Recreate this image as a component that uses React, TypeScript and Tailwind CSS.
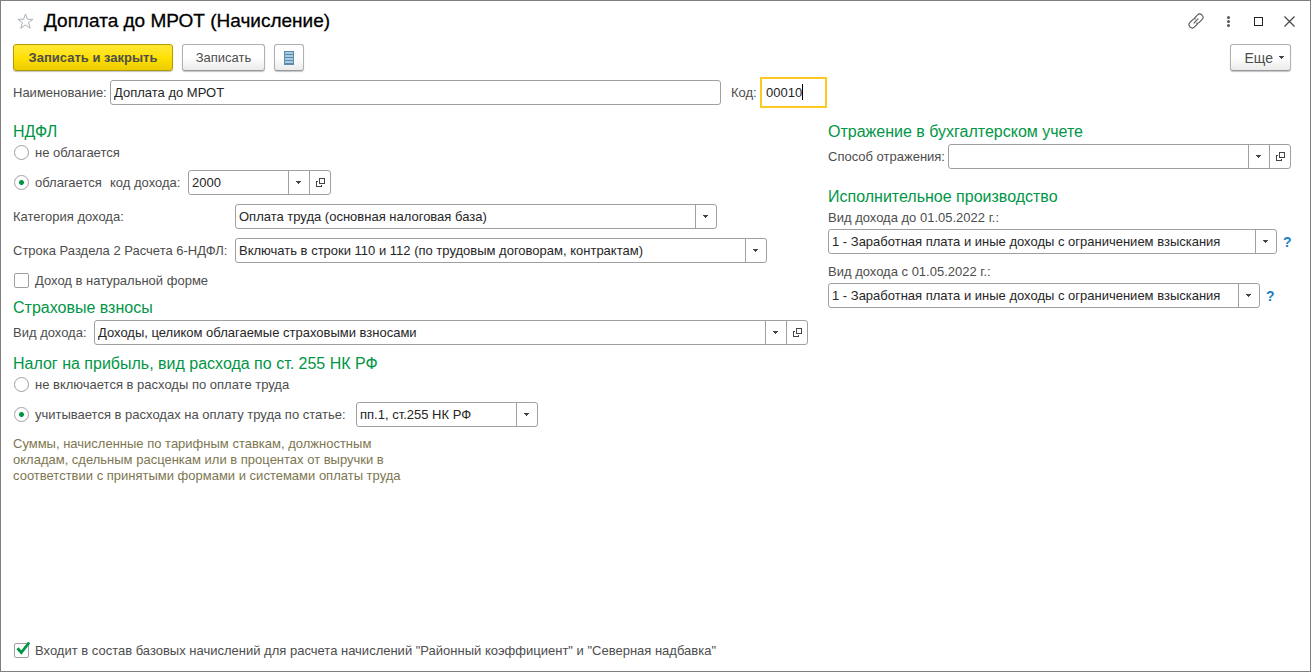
import type { ReactNode } from 'react';

const controlBorder = 'border border-[#a0a0a0] rounded-[3px]';
const buttonBase =
  'h-[27px] rounded-[3px] border border-[#b0b0b0] border-b-[#999999] bg-linear-to-b from-white from-50% to-[#ebebeb] text-[#4d4d4d] shadow-[0_1px_1px_#c4c4c4]';

function Arrow() {
  return (
    <svg width="5" height="3" viewBox="0 0 5 3" shapeRendering="crispEdges">
      <path d="M0 0h5v1H0zM1 1h3v1H1zM2 2h1v1H2z" fill="#444" />
    </svg>
  );
}

interface ComboProps {
  id: string;
  value: string;
  className?: string;
  openable?: boolean;
}

function Combo({ id, value, className = '', openable = false }: ComboProps) {
  return (
    <div className={`flex h-[25px] min-w-0 overflow-hidden bg-white ${controlBorder} ${className}`}>
      <div className="relative min-w-0 flex-1">
        <select
          id={id}
          defaultValue={value}
          className="block h-full w-full appearance-none truncate bg-transparent pr-6 pl-[3px] text-[#262626] outline-none"
        >
          <option value={value}>{value}</option>
        </select>
        <span className="pointer-events-none absolute inset-y-0 right-0 flex w-[21px] items-center justify-center border-l border-[#a0a0a0] pr-px">
          <Arrow />
        </span>
      </div>
      {openable && (
        <button
          type="button"
          aria-label="Открыть"
          className="flex w-[21px] shrink-0 items-center justify-center border-l border-[#a0a0a0]"
        >
          <svg width="9" height="9" viewBox="0 0 9 9" fill="none" stroke="#444" shapeRendering="crispEdges">
            <path d="M3.5 0.5h5v5h-5zM2 3.5H0.5v5h5V7" />
          </svg>
        </button>
      )}
    </div>
  );
}

function Heading({ children, className = '' }: { children: ReactNode; className?: string }) {
  return <h2 className={`h-6 pt-px text-[16px] leading-6 text-[#009646] ${className}`}>{children}</h2>;
}

interface RadioProps {
  name: string;
  label: string;
  checked?: boolean;
}

function Radio({ name, label, checked }: RadioProps) {
  return (
    <label className="flex h-[19px] items-center gap-[6px] pl-px">
      <input
        type="radio"
        name={name}
        defaultChecked={checked}
        className="size-[15px] shrink-0 appearance-none rounded-full border border-[#a0a0a0] bg-white checked:bg-[radial-gradient(circle,#009646_2px,#ffffff_3px)]"
      />
      {label}
    </label>
  );
}

function Checkbox({ label, checked }: { label: string; checked?: boolean }) {
  return (
    <label className="flex h-[19px] items-center gap-[6px] pl-px">
      <span className="relative flex size-[15px] shrink-0">
        <input
          type="checkbox"
          defaultChecked={checked}
          className="peer size-[15px] appearance-none rounded-[2px] border border-[#a0a0a0] bg-white"
        />
        <svg
          width="15"
          height="15"
          viewBox="0 0 15 15"
          fill="none"
          className="pointer-events-none absolute inset-0 hidden overflow-visible peer-checked:block"
        >
          <path d="M3.5 5.2L7.3 9.5L15.2 -0.5" stroke="#009646" strokeWidth="2.8" />
        </svg>
      </span>
      {label}
    </label>
  );
}

function Help() {
  return (
    <button type="button" aria-label="Справка" className="pl-[6px] text-[14px] font-bold text-[#1a7fc4]">
      ?
    </button>
  );
}

function TitleBar() {
  return (
    <header className="flex h-10 items-center">
      <button type="button" aria-label="В избранное" className="mr-[10px] ml-[4px]">
        <svg width="17" height="17" viewBox="0 0 17 17" fill="none" stroke="#a9afb5">
          <path d="M8.5 1l1.9 5.3h5.6l-4.5 3.4 1.7 5.6-4.7-3.4-4.7 3.4 1.7-5.6L1 6.3h5.6z" />
        </svg>
      </button>
      <h1 className="flex-1 text-[19px] leading-6 text-black [-webkit-text-stroke:0.3px_black]">
        Доплата до МРОТ (Начисление)
      </h1>
      <div className="flex items-center">
        <button type="button" aria-label="Получить ссылку" className="mr-[23px]">
          <svg width="16" height="16" viewBox="0 0 16 16" fill="none" stroke="#555" strokeWidth="1.1">
            <path d="M6.2 5.3L9.6 1.8Q11.6 0 13.8 1.9Q16.2 4.2 14.2 6.4L11.2 9.4Q9.8 10.7 8.2 9.9" />
            <path d="M9.8 10.7L6.4 14.2Q4.4 16 2.2 14.1Q-0.2 11.8 1.8 9.6L4.8 6.6Q6.2 5.3 7.8 6.1" />
            <path d="M5.7 10.3L10.3 5.700" />
          </svg>
        </button>
        <button type="button" aria-label="Меню" className="mr-6">
          <svg width="3" height="11" viewBox="0 0 3 11" fill="#555">
            <circle cx="1.5" cy="1.5" r="1.5" />
            <circle cx="1.5" cy="5.5" r="1.5" />
            <circle cx="1.5" cy="9.5" r="1.5" />
          </svg>
        </button>
        <button type="button" aria-label="Развернуть" className="mr-[21px]">
          <svg width="9" height="9" viewBox="0 0 9 9" fill="none" stroke="#222" shapeRendering="crispEdges">
            <path d="M0.5 0.5h8v8h-8z" />
          </svg>
        </button>
        <button type="button" aria-label="Закрыть" className="-mr-1">
          <svg width="11" height="11" viewBox="0 0 11 11" stroke="#444" strokeWidth="1.2">
            <path d="M0.5 0.5l10 10M10.5 0.5l-10 10" />
          </svg>
        </button>
      </div>
    </header>
  );
}

export default function App() {
  return (
    <form className="flex min-h-screen flex-col border border-[#808080] bg-white pr-[19px] pb-[11px] pl-3 font-['Liberation_Sans',Arial,sans-serif] text-[13px] leading-4 text-[#4d4d4d]">
      <TitleBar />

      <div className="mt-[3px] flex items-center">
        <button
          type="button"
          className="mr-[9px] h-[27px] w-40 rounded-[3px] border border-[#b39b00] bg-linear-to-b from-[#ffe833] via-[#ffe100] to-[#eccb00] font-bold text-[#4d4d4d] shadow-[0_1px_1px_#c4c4c4]"
        >
          Записать и закрыть
        </button>
        <button type="button" className={`mr-[9px] w-[83px] ${buttonBase}`}>
          Записать
        </button>
        <button type="button" aria-label="Список" className={`flex w-[30px] items-center justify-center ${buttonBase}`}>
          <svg width="10" height="14" viewBox="0 0 10 14" shapeRendering="crispEdges">
            <path d="M0 0h10v14H0z" fill="#5d8bab" />
            <path d="M1 1h8v2H1zM1 4h8v2H1zM1 7h8v2H1zM1 10h8v2H1z" fill="#a9cbe0" />
          </svg>
        </button>
        <button
          type="button"
          className={`ml-auto flex w-[61px] items-center justify-end gap-[6px] pr-[6px] text-[14px] ${buttonBase}`}
        >
          Еще
          <Arrow />
        </button>
      </div>

      <div className="mt-[6px] flex h-[31px] items-center">
        <label htmlFor="name" className="w-[97px] shrink-0">
          Наименование:
        </label>
        <input
          id="name"
          defaultValue="Доплата до МРОТ"
          className={`h-[25px] w-[611px] min-w-0 px-[3px] text-[#262626] outline-none ${controlBorder}`}
        />
        <label htmlFor="code" className="ml-[10px] w-[29px] shrink-0">
          Код:
        </label>
        <div className="relative shrink-0">
          <input
            id="code"
            defaultValue="00010"
            className="block h-[31px] w-[67px] border-2 border-[#fcc822] px-1 text-[#262626] outline-none"
          />
          <span className="absolute top-[7px] left-[42px] h-4 w-px bg-black" />
        </div>
      </div>

      <main className="mt-[11px] flex gap-5">
        <div className="min-w-0 flex-1">
          <Heading>НДФЛ</Heading>
          <Radio name="ndfl" label="не облагается" />
          <div className="mt-2 flex items-center">
            <div className="w-[97px] shrink-0">
              <Radio name="ndfl" label="облагается" checked />
            </div>
            <label htmlFor="incomeCode" className="w-[78px] shrink-0">
              код дохода:
            </label>
            <Combo id="incomeCode" value="2000" openable className="w-[143px]" />
          </div>
          <div className="mt-[9px] flex items-center">
            <label htmlFor="category" className="w-[222px] shrink-0">
              Категория дохода:
            </label>
            <Combo id="category" value="Оплата труда (основная налоговая база)" className="w-[482px]" />
          </div>
          <div className="mt-[9px] flex items-center">
            <label htmlFor="reportLine" className="w-[222px] shrink-0">
              Строка Раздела 2 Расчета 6-НДФЛ:
            </label>
            <Combo
              id="reportLine"
              value="Включать в строки 110 и 112 (по трудовым договорам, контрактам)"
              className="w-[532px]"
            />
          </div>
          <div className="mt-2">
            <Checkbox label="Доход в натуральной форме" />
          </div>

          <Heading className="mt-[5px]">Страховые взносы</Heading>
          <div className="mt-px flex items-center">
            <label htmlFor="insurance" className="w-[81px] shrink-0">
              Вид дохода:
            </label>
            <Combo id="insurance" value="Доходы, целиком облагаемые страховыми взносами" openable className="flex-1" />
          </div>

          <Heading className="mt-[6px]">Налог на прибыль, вид расхода по ст. 255 НК РФ</Heading>
          <Radio name="profit" label="не включается в расходы по оплате труда" />
          <div className="mt-2 flex items-center">
            <div className="w-[343px] shrink-0">
              <Radio name="profit" label="учитывается в расходах на оплату труда по статье:" checked />
            </div>
            <Combo id="article" value="пп.1, ст.255 НК РФ" className="w-[182px]" />
          </div>
          <p className="mt-[9px] w-[400px] text-[#7d7650]">
            Суммы, начисленные по тарифным ставкам, должностным
            <br />
            окладам, сдельным расценкам или в процентах от выручки в
            <br />
            соответствии с принятыми формами и системами оплаты труда
          </p>
        </div>

        <div className="w-[463px] shrink-0">
          <Heading>Отражение в бухгалтерском учете</Heading>
          <div className="mt-px flex items-center">
            <label htmlFor="accounting" className="w-[120px] shrink-0">
              Способ отражения:
            </label>
            <Combo id="accounting" value="" openable className="flex-1" />
          </div>

          <Heading className="mt-[15px]">Исполнительное производство</Heading>
          <label htmlFor="incomeBefore" className="block leading-5">
            Вид дохода до 01.05.2022 г.:
          </label>
          <div className="mt-px flex items-center">
            <Combo
              id="incomeBefore"
              value="1 - Заработная плата и иные доходы с ограничением взыскания"
              className="w-[449px] shrink-0"
            />
            <Help />
          </div>
          <label htmlFor="incomeAfter" className="mt-2 block leading-5">
            Вид дохода с 01.05.2022 г.:
          </label>
          <div className="mt-px flex items-center">
            <Combo
              id="incomeAfter"
              value="1 - Заработная плата и иные доходы с ограничением взыскания"
              className="w-[432px] shrink-0"
            />
            <Help />
          </div>
        </div>
      </main>

      <footer className="mt-auto pt-4">
        <Checkbox
          label={'Входит в состав базовых начислений для расчета начислений "Районный коэффициент" и "Северная надбавка"'}
          checked
        />
      </footer>
    </form>
  );
}
